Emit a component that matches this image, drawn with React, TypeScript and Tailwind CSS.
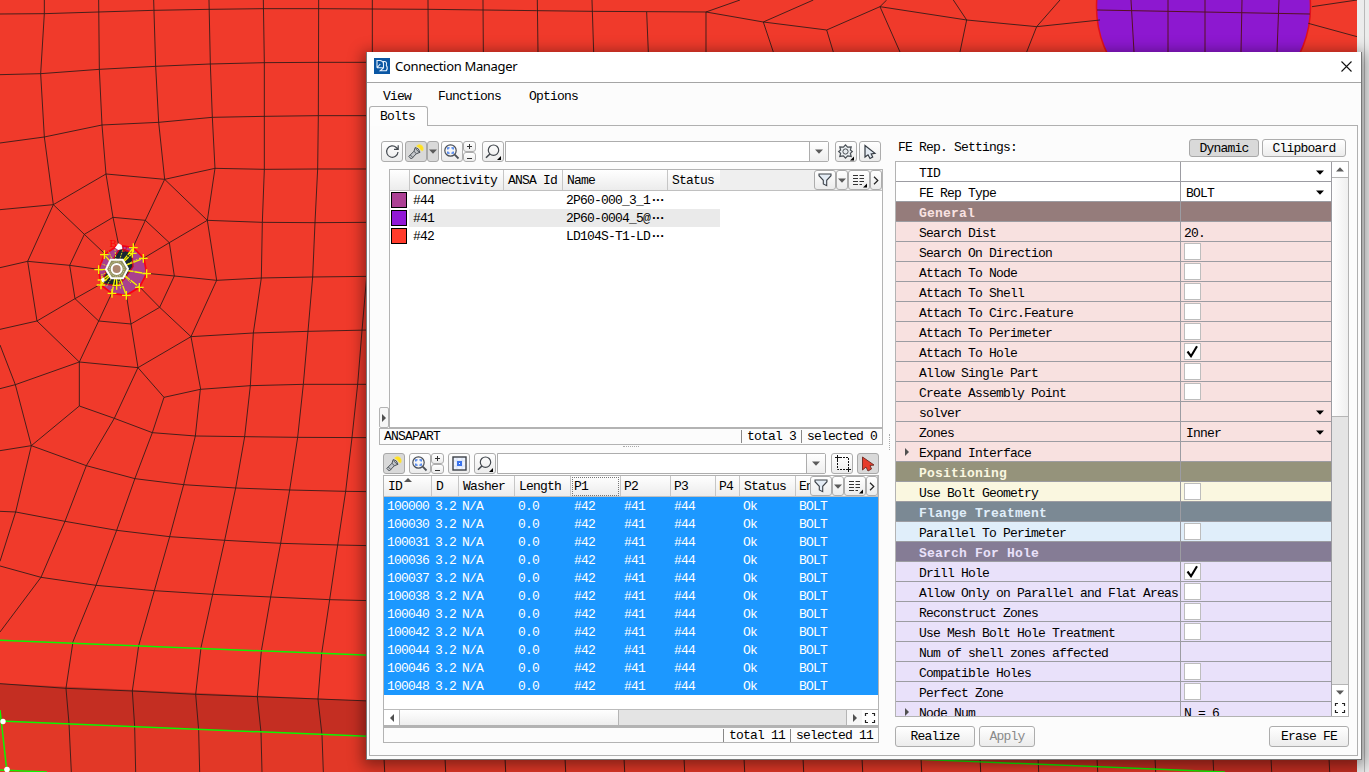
import React from "react";

const MONO = "font-['Liberation_Mono',monospace] text-[13px] tracking-[-0.8px]";

/* Mesh edges, in thirds of a pixel */
const edges = [
  "0,42 133,41 296,36 461,31 627,28 790,26 956,26 1110,27 1290,28 1450,30 1610,32 1780,34 2118,36 2220,0",
  "0,224 122,221 298,208 467,199 631,192 793,188 956,187 1110,187",
  "0,429 133,411 306,375 476,367 637,352 793,349 955,347 1110,347",
  "0,629 160,614 318,522 494,538 645,505 793,508 953,507 1110,507",
  "622,661 787,667 945,668 1110,667",
  "650,841 784,834 938,831 1110,829",
  "573,1010 760,999 924,994 1110,990",
  "492,1192 601,1168 751,1157 910,1153 1110,1153",
  "133,0 133,41 122,221 133,411 160,614 83,784 111,963 238,1086 414,1103 573,1010",
  "296,0 298,208 306,375 318,522 339,652 356,735",
  "461,0 467,199 476,367 494,538 436,661 400,740",
  "627,0 631,192 637,352 645,505 622,661 650,841 573,1010 602,1168",
  "494,538 622,661",
  "790,0 793,188 793,508 787,667 784,834 760,999 751,1157",
  "956,0 955,347 953,507 945,668 938,831 924,994 910,1153",
  "1100,830 1086,992 1073,1153",
  "253,703 339,652 436,661 508,728 523,828 479,922 393,972 296,963 225,896 209,796 253,703",
  "160,614 253,703 313,760",
  "622,661 508,728 430,775",
  "650,841 523,828 440,820",
  "573,1010 479,922 420,862",
  "414,1103 393,972 380,890",
  "238,1086 296,963 335,880",
  "111,963 225,896 303,852",
  "83,784 209,796 295,808",
  "0,803 83,784",
  "0,988 111,963",
  "0,1035 46,1154 94,1337 47,1536 0,1684",
  "0,1166 46,1154 238,1086 238,1218 94,1337",
  "238,1218 343,1255 457,1298 586,1308 734,1310 893,1312 1110,1313",
  "414,1103 343,1255 259,1397 195,1564 123,1732 0,1896",
  "414,1103 492,1192 457,1298 405,1435 350,1591 288,1756 219,1925 198,2065 207,2170 214,2316",
  "0,1352 94,1337 259,1397 405,1436 551,1454 707,1464 869,1470 1037,1474 1110,1475",
  "0,1534 47,1536 195,1564 350,1591 509,1610 674,1621 842,1630 1013,1635 1110,1637",
  "0,1698 123,1732 288,1756 463,1772 638,1783 812,1791 989,1799 1110,1802",
  "601,1168 586,1308 551,1454 509,1610 463,1772 416,1937 397,2073 404,2180 407,2316",
  "751,1157 734,1310 707,1464 674,1621 638,1783 603,1943 587,2083 596,2190 599,2316",
  "910,1153 893,1312 869,1470 842,1630 812,1791 784,1953 772,2090 783,2197 786,2316",
  "1073,1153 1056,1313 1037,1474 1013,1635 989,1799 965,1961 954,2097 966,2205 970,2316",
  "0,2051 198,2065 397,2073 587,2083 772,2090 954,2097 1110,2103",
  "1117,0 1117,156", "1284,0 1285,156", "1449,0 1450,156", "1612,0 1614,156", "1776,0 1781,156", "1940,36 1945,156",
  "2118,36 2118,156", "2118,36 2290,66 2320,156", "2290,66 2440,0", "2290,66 2480,90 2500,156", "2480,90 2640,20 2660,0",
  "2640,20 2700,156", "2640,20 2900,60 2880,156", "2900,60 2860,0", "2900,60 3110,80 3080,156", "3110,80 3180,0", "3110,80 3300,60",
  "3936,20 4071,0", "3925,70 4071,110",
];
const bottomLines = [384, 445, 505, 565, 624, 684, 744, 803, 862, 921, 980, 1038, 1097, 1155, 1213, 1271, 1329];
const boltNodes = [[313, 764], [400, 743], [430, 775], [440, 821], [418, 862], [379, 886], [336, 880], [303, 855], [296, 809], [397, 760], [306, 840], [350, 856]];

function Mesh() {
  return (
    <svg className="absolute inset-0" width="1369" height="772" viewBox="0 0 1369 772">
      <rect width="1369" height="772" fill="#f03a2b" />
      <path d="M0 683.6 L370 701 L1357 742 V772 H1225 L0 721.5Z" fill="#c42e22" />
      <path d="M0 721.5 L1225 772 H0Z" fill="#e23827" />
      <circle cx="1203.5" cy="7" r="107" fill="#8d18d0" stroke="#e0101c" strokeWidth="1.5" />
      <g fill="none" stroke="#571023" strokeWidth="1">
        <path d="M1131 0L1134 52M1168 0V52M1205 0V52M1242 0L1241 52M1279 0L1277 52M1097 10L1310 14" />
      </g>
      <g transform="scale(.33333)" fill="none" stroke="#2a1a18" strokeOpacity=".85" strokeWidth="3">
        {edges.map((p) => <polyline key={p} points={p} />)}
      </g>
      {bottomLines.map((x) => <path key={x} d={`M${x} 758L${x + 0.7} 772`} stroke="#401a16" />)}
      <g stroke="#0cf500" strokeWidth="1.5" fill="none">
        <path d="M0 640.3L370 655.3M0 721L1225 772M0 710L7 772M0 770L47 772" />
      </g>
      <g fill="#fff"><circle cx="3" cy="721.5" r="2.7" /><circle cx="7" cy="769.5" r="2.8" /></g>
      <g transform="scale(.33333)">
        <path d="M356 735L400 743L432 775L440 821L418 862L379 886L336 880L303 855L296 809L313 764Z" fill="#a9408f" stroke="#fa0012" strokeWidth="5" />
        <path d="M360 745L396 757L399 800L375 835L350 858L303 850L325 800Z" fill="#172633" stroke="#cf0920" strokeWidth="4" />
        {boltNodes.map(([x, y]) => (
          <g key={`${x}-${y}`} stroke="#f6f400" strokeWidth="4">
            <path d={`M350 807L${x} ${y}`} strokeDasharray="24 3" />
            <path d={`M${x - 13} ${y}h26M${x} ${y - 13}v26`} />
          </g>
        ))}
        <path d="M350 807L326 755M350 807L345 748M350 807L368 751M350 807L412 778M350 807L412 815M350 807L395 851M350 807L362 867M350 807L319 860M350 807L303 825M350 807L305 792" stroke="#dedb27" strokeWidth="3" strokeDasharray="6 3" />
        <path d="M332 779H368L384 806L369 835H334L318 808Z" fill="#8f8d60" stroke="#fff" strokeWidth="6" />
        <circle cx="350" cy="807" r="15" fill="#ab8670" stroke="#fff" strokeWidth="6" />
        <circle cx="350" cy="807" r="22" fill="none" stroke="#d8d99a" strokeWidth="3" strokeDasharray="3 3" />
        <path d="M345 743l10-13 10 5 2 12-12 3zM303 838l8-6 4 12-8 3z" fill="#fff" />
      </g>
      <text x="109.5" y="247" fill="#f00" fontSize="11" fontFamily="Liberation Serif">B</text>
      <text x="122" y="252" fill="#e00018" fontSize="9" fontFamily="Liberation Serif">B</text>
      <rect x="1357" width="12" height="772" fill="#ececec" />
      <path d="M1364.5 0V772" stroke="#b9b9b9" />
    </svg>
  );
}

const BTN = "flex items-center justify-center rounded-[3px] border shrink-0";

function Btn({ className = "", on = false, children }: { className?: string; on?: boolean; children?: React.ReactNode }) {
  return <div className={`${BTN} ${on ? "border-[#a8a8a8] bg-[#d9d9d9]" : "border-[#adadad] bg-linear-to-b from-white to-[#ececec]"} ${className}`}>{children}</div>;
}
function Down({ c = "#5a5a5a" }: { c?: string }) {
  return <svg width="8" height="5" viewBox="0 0 8 5" className="shrink-0"><path d="M0 .5H8L4 4.7Z" fill={c} /></svg>;
}
function Right() {
  return <svg width="4" height="8" viewBox="0 0 4 8"><path d="M0 0L4 4L0 8Z" fill="#505050" /></svg>;
}
function Torch() {
  return (
    <svg width="18" height="18" viewBox="0 0 18 18">
      <path d="M9.8 2.6Q12 .8 14.8 2.2Q17.4 4.6 15.8 8L14 7.6Q13 4.8 9.8 3.6Z" fill="#ffe11f" stroke="#f6e36a" strokeWidth=".6" />
      <path d="M8.2 4.5Q12 5 13 9.3L9.3 10.8L4.3 16L1.8 13.4L7 8.2Z" fill="#c3c6ca" stroke="#4c5258" />
      <path d="M7 8.2L9.3 10.8M8.4 5.6L12.3 9.4M3.3 12l2.6 2.6" stroke="#4c5258" strokeWidth=".9" />
    </svg>
  );
}
function ZoomFit() {
  return (
    <svg width="16" height="16" viewBox="0 0 16 16" fill="none">
      <circle cx="6.5" cy="6.5" r="5.7" stroke="#4b5058" strokeWidth="1.2" />
      <path d="M10.7 10.7L14.5 14.5" stroke="#4b5058" strokeWidth="1.8" />
      <path d="M3.8 5.6V3.8H5.6M7.4 3.8H9.2V5.6M9.2 7.4V9.2H7.4M5.6 9.2H3.8V7.4" stroke="#3976ec" strokeWidth="1.3" />
    </svg>
  );
}
function Search() {
  return (
    <svg width="18" height="18" viewBox="0 0 18 18" fill="none">
      <circle cx="9.5" cy="7.2" r="5.2" stroke="#43484e" strokeWidth="1.2" />
      <path d="M5.9 11L2 14.8" stroke="#43484e" strokeWidth="1.6" />
      <path d="M17 13V17H13Z" fill="#000" />
    </svg>
  );
}
function PlusMinus() {
  return (
    <div className="flex flex-col shrink-0">
      <Btn className="w-[13px] h-[11px]"><svg width="7" height="7"><path d="M1 3.5H6M3.5 1V6" stroke="#333" /></svg></Btn>
      <Btn className="w-[13px] h-[10px]"><svg width="7" height="7"><path d="M1 4.5H6" stroke="#333" /></svg></Btn>
    </div>
  );
}
function Combo({ className }: { className: string }) {
  return (
    <div className={`flex h-[21px] shrink-0 rounded-r-[2px] border border-[#adadad] bg-white ${className}`}>
      <div className="flex-1" />
      <div className="flex w-[19px] items-center justify-center border-l border-[#adadad] bg-linear-to-b from-white to-[#eee]"><Down /></div>
    </div>
  );
}
function Filters() {
  return (
    <div className="flex">
      <Btn className="w-[22px] h-[20px]">
        <svg width="14" height="14" viewBox="0 0 14 14"><path d="M1 1H13V2.7L8.7 7.3V12.7L5.3 11V7.3L1 2.7Z" fill="#e4ecf5" stroke="#3c4249" strokeWidth="1.1" /></svg>
      </Btn>
      <Btn className="w-[12px] h-[20px]"><Down /></Btn>
      <Btn className="w-[22px] h-[20px]">
        <svg width="16" height="16" viewBox="0 0 16 16"><path d="M2 3.5H7M2 6.5H7M2 9.5H7M2 12.5H7M8.5 3.5H13M8.5 6.5H13M8.5 9.5H13M8.5 12.5H11" stroke="#333" /><path d="M16 11.5V15.5H12Z" /></svg>
      </Btn>
      <Btn className="w-[12px] h-[20px]"><svg width="6" height="9" fill="none"><path d="M1 .8L4.8 4.5L1 8.2" stroke="#222" strokeWidth="1.2" /></svg></Btn>
    </div>
  );
}
function Expand() {
  return <svg width="12" height="12" viewBox="0 0 12 12" fill="none"><path d="M1.5 4V1.5H4M8 1.5H10.5V4M10.5 8V10.5H8M4 10.5H1.5V8" stroke="#222" strokeWidth="1.2" /></svg>;
}
const TH = "flex h-full shrink-0 items-center border-r border-[#c6c6c6] bg-linear-to-b from-white to-[#ececec] pt-[2px]";

function Parts() {
  const rows = [
    ["bg-[#ac4094]", "#44", "2P60-000_3_1", "bg-white"],
    ["bg-[#9118d6]", "#41", "2P60-0004_5@", "bg-[#eaeaea]"],
    ["bg-[#ff3b2b]", "#42", "LD104S-T1-LD", "bg-white"],
  ];
  return (
    <div className="ml-[10px] mt-[7px] flex h-[259px] w-[494px] flex-col border border-[#b3b3b3] bg-white">
      <div className="flex h-[21px] shrink-0 justify-between border-b border-[#c0c0c0] bg-[#efefef]">
        <div className="flex">
          <div className={`${TH} w-[20px]`} />
          <div className={`${TH} w-[94px] pl-[3px]`}>Connectivity</div>
          <div className={`${TH} w-[59px] pl-[4px]`}>ANSA Id</div>
          <div className={`${TH} w-[105px] pl-[4px]`}>Name</div>
          <div className={`${TH} w-[52px] border-r-0 pl-[4px]`}>Status</div>
        </div>
        <Filters />
      </div>
      {rows.map(([c, id, name, bg]) => (
        <div key={id} className="flex h-[18px] w-[330px] items-center">
          <div className={`ml-px size-[16px] shrink-0 border border-black ${c}`} />
          <div className={`ml-[2px] flex h-full flex-1 items-center pt-px ${bg}`}>
            <span className="w-[157px] pl-[4px]">{id}</span>
            <span>{name}</span><span className="font-bold tracking-[-3.7px]">···</span>
          </div>
        </div>
      ))}
    </div>
  );
}

function Status({ left = "", total, selected, className }: { left?: string; total: string; selected: string; className: string }) {
  return (
    <div className={`flex shrink-0 items-center border border-[#b3b3b3] bg-[#fcfcfc] pl-[4px] pr-[5px] ${className}`}>
      <span className="flex-1">{left}</span>
      <span className="border-l border-[#888] pl-[5px] leading-[13px]">{total}</span>
      <span className="ml-[5px] border-l border-[#888] pl-[5px] leading-[13px]">{selected}</span>
    </div>
  );
}

const ids = [100000, 100030, 100031, 100036, 100037, 100038, 100040, 100042, 100044, 100046, 100048];

function Bolts() {
  return (
    <div className="ml-[4px] mt-px flex h-[251px] w-[496px] shrink-0 flex-col border border-[#b3b3b3] bg-white">
      <div className="relative flex h-[21px] shrink-0 overflow-hidden border-b border-[#c0c0c0]">
        <div className={`${TH} relative w-[48px] pl-[4px]`}>ID
          <svg className="absolute left-[20px] top-[2px]" width="8" height="4"><path d="M0 4L4 0L8 4Z" fill="#555" /></svg>
        </div>
        <div className={`${TH} w-[27px] pl-[4px]`}>D</div>
        <div className={`${TH} w-[56px] pl-[4px]`}>Washer</div>
        <div className={`${TH} w-[56px] pl-[4px]`}>Length</div>
        <div className={`${TH} w-[50px] pl-px`}><div className="-mt-[2px] h-[19px] w-[47px] border border-dotted border-[#777] pl-px leading-[18px]">P1</div></div>
        <div className={`${TH} w-[50px] pl-[3px]`}>P2</div>
        <div className={`${TH} w-[45px] pl-[3px]`}>P3</div>
        <div className={`${TH} w-[24px] pl-[3px]`}>P4</div>
        <div className={`${TH} w-[56px] pl-[4px]`}>Status</div>
        <div className={`${TH} w-[82px] pl-[3px]`}>En</div>
        <div className="absolute right-0 top-0"><Filters /></div>
      </div>
      {ids.map((id) => (
        <div key={id} className="flex h-[18px] shrink-0 items-center bg-[#1c98ff] pl-[3px] pt-[2px] text-white">
          <span className="w-[48px]">{id}</span><span className="w-[27px]">3.2</span><span className="w-[56px]">N/A</span>
          <span className="w-[56px]">0.0</span><span className="w-[50px]">#42</span><span className="w-[50px]">#41</span>
          <span className="w-[69px]">#44</span><span className="w-[56px]">Ok</span><span>BOLT</span>
        </div>
      ))}
      <div className="flex-1" />
      <div className="flex h-[16px] shrink-0 border-t border-[#bbb] bg-[#e4e4e4]">
        <div className="flex w-[16px] items-center justify-center border-r border-[#b5b5b5] bg-white"><div className="rotate-180"><Right /></div></div>
        <div className="w-[219px] border-r border-[#b5b5b5] bg-linear-to-b from-white to-[#eee]" />
        <div className="flex-1" />
        <div className="flex w-[16px] items-center justify-center border-l border-[#b5b5b5] bg-[#f6f6f6]"><Right /></div>
        <div className="flex w-[16px] items-center justify-center bg-white"><Expand /></div>
      </div>
    </div>
  );
}

type Row = { l: string; v?: string; t?: "h" | "c" | "k" | "d"; a?: boolean; bg: string };
const P = "bg-[#f8e1e0]", Y = "bg-[#faf7e0]", B = "bg-[#e0eefa]", V = "bg-[#e9e1fa]";
const settings: Row[] = [
  { l: "TID", t: "d", bg: "bg-white" }, { l: "FE Rep Type", v: "BOLT", t: "d", bg: "bg-white" },
  { l: "General", t: "h", bg: "bg-[#957c7b] text-[#f9e2e1]" },
  { l: "Search Dist", v: "20.", bg: P }, { l: "Search On Direction", t: "c", bg: P }, { l: "Attach To Node", t: "c", bg: P },
  { l: "Attach To Shell", t: "c", bg: P }, { l: "Attach To Circ.Feature", t: "c", bg: P }, { l: "Attach To Perimeter", t: "c", bg: P },
  { l: "Attach To Hole", t: "k", bg: P }, { l: "Allow Single Part", t: "c", bg: P }, { l: "Create Assembly Point", t: "c", bg: P },
  { l: "solver", t: "d", bg: P }, { l: "Zones", v: "Inner", t: "d", bg: P }, { l: "Expand Interface", a: true, bg: P },
  { l: "Positioning", t: "h", bg: "bg-[#95937b] text-[#faf7e0]" }, { l: "Use Bolt Geometry", t: "c", bg: Y },
  { l: "Flange Treatment", t: "h", bg: "bg-[#7b8994] text-[#e0eefa]" }, { l: "Parallel To Perimeter", t: "c", bg: B },
  { l: "Search For Hole", t: "h", bg: "bg-[#857c95] text-[#e9e1fa]" }, { l: "Drill Hole", t: "k", bg: V },
  { l: "Allow Only on Parallel and Flat Areas", t: "c", bg: V }, { l: "Reconstruct Zones", t: "c", bg: V },
  { l: "Use Mesh Bolt Hole Treatment", t: "c", bg: V }, { l: "Num of shell zones affected", bg: V },
  { l: "Compatible Holes", t: "c", bg: V }, { l: "Perfect Zone", t: "c", bg: V }, { l: "Node Num", v: "N = 6", a: true, bg: V },
];

function Settings() {
  return (
    <div className="mt-[4px] flex h-[556px] w-[454px] border border-[#b3b3b3] bg-white">
      <div className="w-[436px] overflow-hidden border-r border-[#9c9ca2]">
        {settings.map((r) => (
          <div key={r.l} className={`flex h-[20px] border-b border-[#9c9ca2] ${r.bg}`}>
            <div className="flex w-[285px] shrink-0 items-center whitespace-nowrap border-r border-[#9c9ca2] pt-[4px]">
              <span className="flex w-[23px] shrink-0 justify-center pb-[4px] pr-[2px]">{r.a && <Right />}</span>
              <span className={r.t === "h" ? "font-bold tracking-[0.2px]" : ""}>{r.l}</span>
            </div>
            <div className="flex flex-1 items-center justify-between pl-[3px] pr-[7px]">
              {r.t === "c" || r.t === "k" ? (
                <div className="flex size-[17px] items-center justify-center border border-[#bdbdbd] bg-white">
                  {r.t === "k" && <svg width="13" height="13" viewBox="0 0 13 13" fill="none"><path d="M1.5 6.5L5 11.2L11 1.2" stroke="#000" strokeWidth="2.1" /></svg>}
                </div>
              ) : <span className={`pt-[4px] ${r.t === "d" ? "pl-[2px]" : ""}`}>{r.v}</span>}
              {r.t === "d" && <div className="pt-[2px]"><Down c="#000" /></div>}
            </div>
          </div>
        ))}
      </div>
      <div className="flex flex-1 flex-col bg-[#e4e4e4]">
        <div className="flex h-[16px] items-center justify-center border-b border-[#b5b5b5] bg-white"><div className="rotate-180"><Down /></div></div>
        <div className="h-[239px] border-b border-[#b5b5b5] bg-linear-to-r from-white to-[#efefef]" />
        <div className="flex-1" />
        <div className="flex h-[16px] items-center justify-center border-t border-[#b5b5b5] bg-white"><Down /></div>
        <div className="flex h-[16px] items-center justify-center bg-white"><Expand /></div>
      </div>
    </div>
  );
}

function LeftPane() {
  return (
    <div className="flex w-[504px] flex-col">
      <div className="ml-[2px] flex h-[21px] items-center">
        <Btn className="h-[21px] w-[22px]">
          <svg width="15" height="15" viewBox="0 0 15 15" fill="none"><path d="M13 8A5.7 5.7 0 1 1 11.3 3.5L13 5.2M13.2 1.2V5.4H9" stroke="#444a50" strokeWidth="1.2" /></svg>
        </Btn>
        <Btn on className="ml-[2px] h-[21px] w-[22px]"><Torch /></Btn>
        <Btn on className="h-[21px] w-[12px]"><Down /></Btn>
        <Btn className="ml-[2px] h-[21px] w-[22px]"><ZoomFit /></Btn>
        <PlusMinus />
        <Btn className="ml-[6px] h-[21px] w-[22px]"><Search /></Btn>
        <Combo className="ml-[1px] w-[324px]" />
        <Btn className="ml-[6px] h-[21px] w-[22px]">
          <svg width="18" height="18" viewBox="0 0 18 18" fill="none">
            <path d="M8.5 1.8L10.6 4.2L14.2 4L13.4 7L15.3 8.5L13.4 10.4L14.2 13.4L10.6 12.8L8.5 15.2L6.4 12.8L2.8 13.4L3.6 10.4L1.7 8.5L3.6 7L2.8 4L6.4 4.2Z" stroke="#4a5056" strokeWidth="1.2" fill="#e9edf0" />
            <circle cx="8.5" cy="8.5" r="2.6" stroke="#4a5056" /><path d="M17 13.5V17.5H13Z" fill="#000" />
          </svg>
        </Btn>
        <Btn className="ml-[2px] h-[21px] w-[22px]">
          <svg width="14" height="16" viewBox="0 0 14 16"><path d="M2 1.5V13L5 10.8L7 14.5L9.7 13L8.2 10L12 9.3Z" fill="#e3eaf2" stroke="#333a42" strokeWidth="1.2" /></svg>
        </Btn>
      </div>
      <div className="relative">
        <Parts />
        <div className="absolute bottom-0 left-0 flex h-[21px] w-[10px] items-center justify-center rounded-[2px] border border-[#b3b3b3] bg-[#f7f7f7]"><Right /></div>
      </div>
      <Status className="h-[17px] w-[504px]" left="ANSAPART" total="total 3" selected="selected 0" />
      <div className="flex h-[8px] justify-center pt-px"><div className="h-0 w-[16px] border-t border-dotted border-[#aaa]" /></div>
      <div className="ml-[4px] flex h-[21px] items-center">
        <Btn on className="h-[21px] w-[22px]"><Torch /></Btn>
        <Btn className="ml-[4px] h-[21px] w-[22px]"><ZoomFit /></Btn>
        <PlusMinus />
        <Btn className="ml-[4px] h-[21px] w-[22px]">
          <svg width="15" height="15" viewBox="0 0 15 15"><rect x="1" y="1" width="13" height="13" fill="#eef4ff" stroke="#3c4148" strokeWidth="1.4" /><path d="M2 5H13M2 10H13M5 2V13M10 2V13" stroke="#d6e0f5" /><rect x="5" y="5" width="5" height="5" fill="#3973ee" /><rect x="7" y="7" width="1" height="1" fill="#fff" /></svg>
        </Btn>
        <Btn className="ml-[4px] h-[21px] w-[22px]"><Search /></Btn>
        <Combo className="ml-[1px] w-[329px]" />
        <Btn className="ml-[5px] h-[21px] w-[22px]">
          <svg width="17" height="17" viewBox="0 0 17 17"><path d="M3.5 5V14.5H12M6 2.5H14.5V12" fill="none" stroke="#111" strokeDasharray="2 1" /><path d="M1 2.5H6M3.5 0V5M12 14.5H17M14.5 12V17" stroke="#111" /></svg>
        </Btn>
        <Btn on className="ml-[4px] h-[21px] w-[22px]">
          <svg width="14" height="16" viewBox="0 0 14 16"><path d="M1.5 1V14L5 11L7 15L10.5 13L9 9.5L13 9Z" fill="#e63c2b" stroke="#76322a" /></svg>
        </Btn>
      </div>
      <Bolts />
      <Status className="ml-[4px] h-[17px] w-[496px] border-t-[2px]" total="total 11" selected="selected 11" />
    </div>
  );
}

export default function App() {
  return (
    <div className="relative h-[772px] w-[1369px] overflow-hidden">
      <Mesh />
      <div className={`absolute left-[366px] top-[52px] flex h-[708px] w-[996px] flex-col whitespace-pre border-b border-l border-r border-[#777] bg-[#fcfcfc] leading-[16px] text-black shadow-[0_3px_14px_3px_rgba(0,0,0,0.42)] ${MONO}`}>
        <div className="flex h-[31px] shrink-0 items-center border-b border-[#a5a5a5] bg-white pb-[2px] pl-[7px] pr-[9px]">
          <svg width="16" height="16" viewBox="0 0 16 16"><rect width="16" height="16" fill="#0b57a4" /><path d="M3 9.8V2.5H6.2Q9.5 3 9.5 6.5M3 9.8H9.5V3.5H10.7Q13.3 4 12.3 7.2Q14.3 10 12.2 12.8H6.2L9.5 9.8M3.2 9.5L6.3 6" fill="none" stroke="#e6f0fc" strokeWidth="1.1" /></svg>
          <span className="ml-[5px] flex-1 font-['Noto_Sans',sans-serif] text-[13px] tracking-[-0.33px]">Connection Manager</span>
          <svg width="11" height="11"><path d="M.5 .5L10.5 10.5M10.5 .5L.5 10.5" stroke="#111" strokeWidth="1.1" /></svg>
        </div>
        <div className="flex h-[23px] shrink-0 items-center pl-[16px] pt-[4px]">
          <span className="w-[55px]">View</span><span className="w-[91px]">Functions</span><span>Options</span>
        </div>
        <div className="mr-[3px] flex h-[20px] shrink-0 pl-[2px]">
          <div className="flex w-[59px] items-center rounded-t-[3px] border border-b-0 border-[#b0b0b0] bg-[#fdfdfd] pl-[10px] pt-px">Bolts</div>
          <div className="flex-1 border-b border-[#b0b0b0]" />
        </div>
        <div className="mb-[3px] ml-[2px] mr-[3px] flex flex-1 border-b border-l border-r border-[#b0b0b0] pl-[9px] pt-[15px]">
          <LeftPane />
          <div className="flex w-[12px] justify-center pt-[293px]"><div className="h-[16px] w-0 border-l border-dotted border-[#aaa]" /></div>
          <div className="-mt-[2px] flex w-[454px] flex-col">
            <div className="flex h-[18px] items-center">
              <span className="flex-1 pl-[3px]">FE Rep. Settings:</span>
              <Btn on className="h-[18px] w-[70px] pt-[2px]">Dynamic</Btn>
              <Btn className="ml-[3px] mr-[3px] h-[18px] w-[84px] pt-[2px]">Clipboard</Btn>
            </div>
            <Settings />
            <div className="mt-[9px] flex">
              <Btn className="h-[21px] w-[80px] pt-px">Realize</Btn>
              <Btn className="ml-[4px] h-[21px] w-[56px] pt-px text-[#8a8a8a]">Apply</Btn>
              <div className="flex-1" />
              <Btn className="h-[21px] w-[80px] pt-px">Erase FE</Btn>
            </div>
          </div>
        </div>
      </div>
    </div>
  );
}
